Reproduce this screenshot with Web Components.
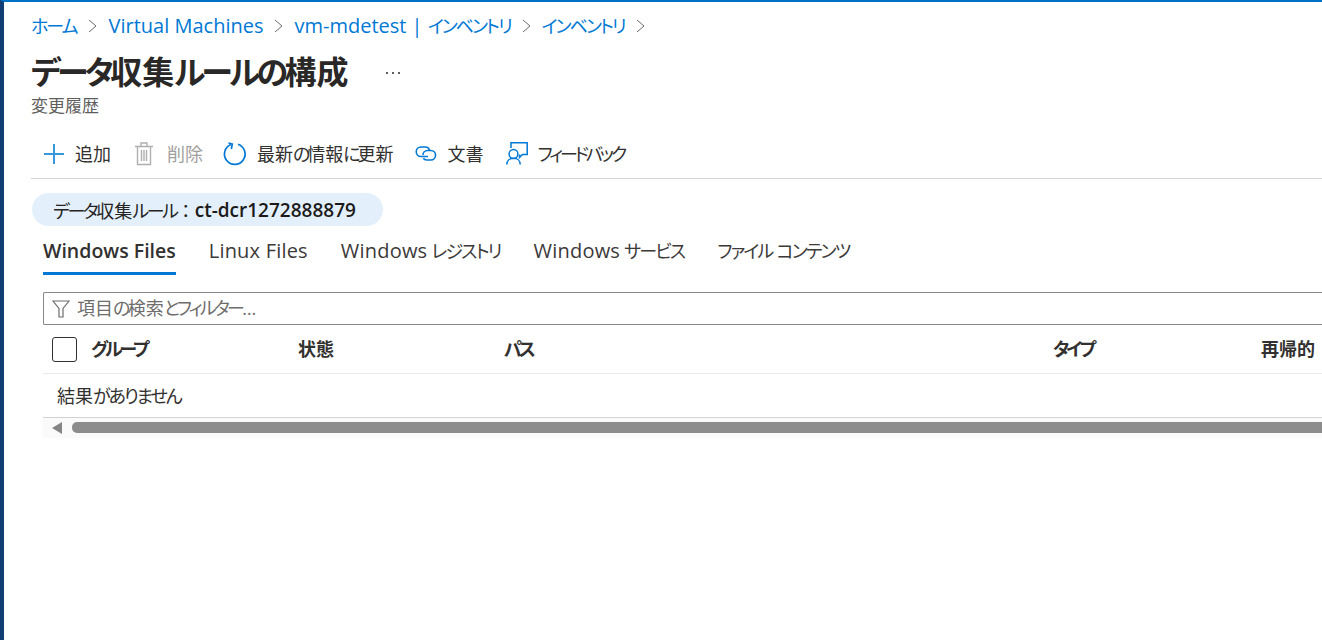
<!DOCTYPE html>
<html lang="ja">
<head>
<meta charset="utf-8">
<title>データ収集ルールの構成</title>
<style>
    html, body { margin: 0; height: 100%; background: #fff; overflow: hidden; }
    body {
        font-family: "Noto Sans CJK JP", sans-serif;
        color: #323130;
    }
</style>
</head>
<body>
<azure-blade>
    <azure-breadcrumb slot="crumbs">
        <a>ホーム</a><a>Virtual Machines</a><a>vm-mdetest | インベントリ</a><a>インベントリ</a>
    </azure-breadcrumb>
    <azure-title slot="title" subtitle="変更履歴">データ収集ルールの構成</azure-title>
    <azure-toolbar slot="toolbar"></azure-toolbar>
    <azure-pill slot="pill" label="データ収集ルール">ct-dcr1272888879</azure-pill>
    <azure-tabs slot="tabs"></azure-tabs>
    <azure-filter slot="filter" placeholder="項目の検索とフィルター"></azure-filter>
    <azure-grid slot="grid"></azure-grid>
</azure-blade>

<script>
const CJK = '"Noto Sans CJK JP", sans-serif';
const LATIN = '"Open Sans", "Noto Sans CJK JP", sans-serif';

// the reference sets kana tighter than kanji, and latin larger than both
const KANA_RULE = `.k { letter-spacing: var(--k, -.1em); }`;

function kana(text) {
    return text.replace(/[\u3040-\u30ff]+/g, m => `<span class="k">${m}</span>`);
}

function mix(text) {
    return kana(text.replace(/[A-Za-z][A-Za-z\- ]*[A-Za-z]( \| )?/g, m => `<span class="l">${m}</span>`));
}

class AzureBlade extends HTMLElement {
    constructor() {
        super();
        this.attachShadow({ mode: 'open' }).innerHTML = `
        <style>
            :host {
                display: block;
                box-sizing: border-box;
                height: 640px;
                border-top: 2px solid #0072c6;
                border-left: 4px solid #123f73;
                overflow: hidden;
                background: #fff;
            }
            .head { padding: 11px 0 0 27px; }
            .body { padding: 0 0 0 39px; }
            .pill { padding: 14px 0 0 28px; }
        </style>
        <div class="head">
            <slot name="crumbs"></slot>
            <slot name="title"></slot>
        </div>
        <slot name="toolbar"></slot>
        <div class="pill"><slot name="pill"></slot></div>
        <div class="body">
            <slot name="tabs"></slot>
            <slot name="filter"></slot>
            <slot name="grid"></slot>
        </div>`;
    }
}

class AzureBreadcrumb extends HTMLElement {
    connectedCallback() {
        const items = [...this.querySelectorAll('a')].map(a => a.textContent);
        this.attachShadow({ mode: 'open' }).innerHTML = `
        <style>
            :host {
                --k: -.11em;
                display: flex;
                align-items: center;
                height: 24px;
                font: 18px/24px ${CJK};
                font-feature-settings: "palt";
                color: #0078d4;
                white-space: pre;
            }
            ${KANA_RULE}
            .l { font: 20px/24px ${LATIN}; }
            svg { margin: 2px 11px 0 11px; flex: none; }
            svg:first-of-type { margin-right: 12px; }
        </style>
        ${items.map(t => `<span>${mix(t)}</span><svg width="9" height="14" viewBox="0 0 9 14"><path d="M1 1l7 6-7 6" fill="none" stroke="#6b6a69" stroke-width="1"/></svg>`).join('')}`;
    }
}

class AzureTitle extends HTMLElement {
    connectedCallback() {
        const sub = this.getAttribute('subtitle') || '';
        this.attachShadow({ mode: 'open' }).innerHTML = `
        <style>
            :host { display: block; padding-top: 13px; --k: -.115em; }
            ${KANA_RULE}
            .row { display: flex; align-items: center; height: 40px; }
            h1 {
                margin: 0;
                font: 700 32px/40px ${CJK};
                font-feature-settings: "palt";
                color: #292827;
                white-space: nowrap;
            }
            .more { margin: 6px 0 0 36px; width: 18px; flex: none; }
            p {
                margin: 3px 0 0;
                font: 17px/24px ${CJK};
                color: #605e5c;
            }
        </style>
        <div class="row">
            <h1>${kana(this.textContent.trim())}</h1>
            <svg class="more" width="18" height="4" viewBox="0 0 18 4"><g fill="#605e5c"><rect x="1" y="1" width="2" height="2"/><rect x="7" y="1" width="2" height="2"/><rect x="13" y="1" width="2" height="2"/></g></svg>
        </div>
        <p>${sub}</p>`;
    }
}

class AzureToolbar extends HTMLElement {
    connectedCallback() {
        const blue = '#0078d4';
        const items = [
            { label: '追加', box: 20, gap: 11, icon: `<path d="M10 2v20M0 12h20" stroke="#3a96dd" stroke-width="2" fill="none"/>` },
            { label: '削除', box: 18, gap: 14, left: 2, off: true, icon: `<path d="M0 4.500h18M6 4V1h6v3M2.500 4.500V22.500h13V4.500M6.500 8v11M9 8v11M11.500 8v11" stroke="#b0afae" stroke-width="1.400" fill="none"/>` },
            { label: '最新の情報に更新', box: 22, gap: 11, left: -1, icon: `<path d="M14 2.300A10.300 10.300 0 1 1 7 2.500" stroke="${blue}" stroke-width="1.700" fill="none"/><path d="M4.500 1l3.800 1.200-1 4.800" stroke="${blue}" stroke-width="1.700" fill="none"/>` },
            { label: '文書', box: 22, gap: 11, left: -1, icon: `<path d="M13 14.500H6a4.500 4.500 0 0 1 0-9.500h4c2.500 0 4.300 1.500 4.700 3.800" stroke="${blue}" stroke-width="1.600" fill="none"/><path d="M8 13c0-2.600 2-4.500 4.500-4.500h3.300a4.700 4.700 0 0 1 0 9.500h-4c-1.500 0-2.800-.6-3.500-1.700" stroke="${blue}" stroke-width="1.600" fill="none"/>` },
            { label: 'フィードバック', box: 22, gap: 10, icon: `<path d="M5 6V.8h16.200v11.600h-4.700l-3 3v-3" stroke="${blue}" stroke-width="1.500" fill="none"/><circle cx="7.500" cy="12" r="4.400" stroke="${blue}" stroke-width="1.500" fill="none"/><path d="M.8 22.500c0-3.800 2.800-6.200 6.700-6.200s6.700 2.400 6.700 6.200" stroke="${blue}" stroke-width="1.500" fill="none"/>` },
        ];
        this.attachShadow({ mode: 'open' }).innerHTML = `
        <style>
            :host {
                --k: -.17em;
                display: flex;
                align-items: center;
                gap: 22px;
                height: 49px;
                margin: 12px 0 0 27px;
                padding-left: 13px;
                border-bottom: 1px solid #d6d6d6;
                font: 18px/24px ${CJK};
                font-feature-settings: "palt";
                color: #323130;
                white-space: nowrap;
            }
            ${KANA_RULE}
            .item { display: flex; align-items: center; }
            .item span:not(.k) { padding-bottom: 2px; }
            .item.off { color: #a19f9d; }
            svg { flex: none; overflow: visible; }
        </style>
        ${items.map(i => `<div class="item${i.off ? ' off' : ''}" style="gap:${i.gap}px;margin-left:${i.left || 0}px"><svg width="${i.box}" height="24" viewBox="0 0 ${i.box} 24">${i.icon}</svg><span>${kana(i.label)}</span></div>`).join('')}`;
    }
}

class AzurePill extends HTMLElement {
    connectedCallback() {
        this.attachShadow({ mode: 'open' }).innerHTML = `
        <style>
            :host {
                --k: -.13em;
                display: inline-flex;
                align-items: center;
                box-sizing: border-box;
                height: 33px;
                padding: 0 27px 0 21px;
                border-radius: 17px;
                background: #e3f0fb;
                font: 18px/24px ${CJK};
                font-feature-settings: "palt";
                color: #252423;
                white-space: nowrap;
            }
            ${KANA_RULE}
            .colon { font-feature-settings: normal; }
            b { font: 600 19px/24px ${LATIN}; color: #1b1a19; }
        </style>
        <span>${kana(this.getAttribute('label') || '')}<span class="colon">：</span></span><b><slot></slot></b>`;
    }
}

class AzureTabs extends HTMLElement {
    connectedCallback() {
        const tabs = ['Windows Files', 'Linux Files', 'Windows レジストリ', 'Windows サービス', 'ファイル コンテンツ'];
        this.attachShadow({ mode: 'open' }).innerHTML = `
        <style>
            :host {
                --k: -.1em;
                display: flex;
                gap: 33px;
                height: 44px;
                margin-top: 5px;
                font: 18px/38px ${CJK};
                font-feature-settings: "palt";
                color: #3b3a39;
                white-space: pre;
            }
            ${KANA_RULE}
            .l { font: 20px/38px ${LATIN}; letter-spacing: .2px; }
            .tab { box-sizing: border-box; height: 44px; }
            .tab.on { border-bottom: 3px solid #0078d4; color: #323130; }
            .tab.on .l { font-weight: 600; font-size: 19.500px; letter-spacing: 0; }
        </style>
        ${tabs.map((t, i) => `<div class="tab${i ? '' : ' on'}">${mix(t)}</div>`).join('')}`;
    }
}

class AzureFilter extends HTMLElement {
    connectedCallback() {
        this.attachShadow({ mode: 'open' }).innerHTML = `
        <style>
            :host {
                --k: -.15em;
                display: flex;
                align-items: center;
                gap: 7px;
                box-sizing: border-box;
                height: 33px;
                margin-top: 17px;
                padding-left: 8px;
                border: 1px solid #8a8886;
                border-right: 0;
                border-radius: 2px 0 0 2px;
                font: 18px/24px ${CJK};
                font-feature-settings: "palt";
                color: #6e6d6c;
                white-space: nowrap;
            }
            ${KANA_RULE}
            .text { padding-bottom: 2px; }
            .dots { font-family: ${LATIN}; }
            svg { flex: none; }
        </style>
        <svg width="18" height="18" viewBox="0 0 18 18"><path d="M1 1h16l-6 7.500V17H7V8.500z" fill="none" stroke="#6e6d6c" stroke-width="1.200"/></svg>
        <span class="text">${kana(this.getAttribute('placeholder') || '')}<span class="dots">…</span></span>`;
    }
}

class AzureGrid extends HTMLElement {
    connectedCallback() {
        this.attachShadow({ mode: 'open' }).innerHTML = `
        <style>
            :host {
                --k: -.17em;
                display: block;
                font: 18px/24px ${CJK};
                font-feature-settings: "palt";
                color: #323130;
            }
            ${KANA_RULE}
            .head {
                display: grid;
                grid-template-columns: 48px 207px 206px 549px 208px 1fr;
                align-items: center;
                height: 48px;
                border-bottom: 1px solid #e8e8e8;
                white-space: nowrap;
            }
            .check {
                box-sizing: border-box;
                width: 25px;
                height: 25px;
                margin-left: 9px;
                border: 1px solid #323130;
                border-radius: 3px;
            }
            .head b { font-weight: 700; padding-bottom: 2px; }
            .empty {
                --k: -.12em;
                height: 43px;
                line-height: 42px;
                padding-left: 14px;
                border-bottom: 1px solid #d2d2d2;
            }
            .scroll {
                display: flex;
                align-items: flex-start;
                box-sizing: border-box;
                height: 20px;
                padding-top: 4px;
                background: #fafafa;
            }
            .scroll svg { flex: none; margin-left: 9px; }
            .thumb {
                flex: 1;
                height: 11px;
                margin-left: 9px;
                border-radius: 5px 0 0 5px;
                background: #8c8c8c;
            }
        </style>
        <div class="head">
            <div class="check"></div>
            <b>${kana('グループ')}</b><b>${kana('状態')}</b><b>${kana('パス')}</b><b>${kana('タイプ')}</b><b>${kana('再帰的')}</b>
        </div>
        <div class="empty">${kana('結果がありません')}</div>
        <div class="scroll">
            <svg width="11" height="12" viewBox="0 0 11 12"><path d="M10 0v12L0 6z" fill="#858585"/></svg>
            <div class="thumb"></div>
        </div>`;
    }
}

customElements.define('azure-blade', AzureBlade);
customElements.define('azure-breadcrumb', AzureBreadcrumb);
customElements.define('azure-title', AzureTitle);
customElements.define('azure-toolbar', AzureToolbar);
customElements.define('azure-pill', AzurePill);
customElements.define('azure-tabs', AzureTabs);
customElements.define('azure-filter', AzureFilter);
customElements.define('azure-grid', AzureGrid);
</script>
</body>
</html>
